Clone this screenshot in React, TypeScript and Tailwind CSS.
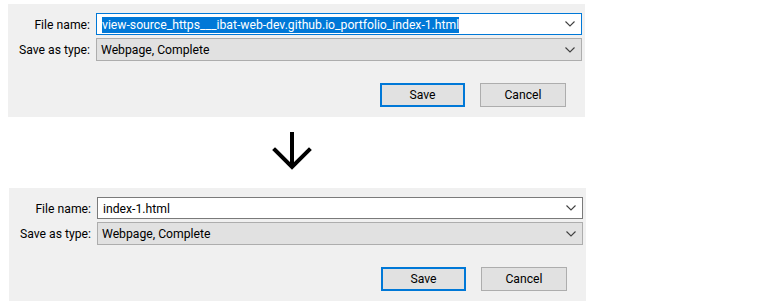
import React from "react";

const Chevron = () => (
  <svg width="10" height="6" viewBox="0 0 10 6" className="shrink-0">
    <path d="M0.5 0.5 L5 5 L9.5 0.5" fill="none" stroke="#404040" strokeWidth="1.1" />
  </svg>
);

function Panel({ selected, name }: { selected: boolean; name: string }) {
  return (
    <div className="w-[577px] h-[113px] bg-[#f0f0f0] flex flex-col pt-[9px] pr-[3px]">
      <div className="flex items-center h-[22px]">
        <div className="w-[83px] text-right pr-[1px] pt-[2px]">File name:</div>
        <div
          className={
            "ml-[5px] w-[486px] h-[22px] bg-white flex items-center pl-[5px] pr-[6px] " +
            (selected ? "border border-[#0078d7]" : "border border-[#7a7a7a]")
          }
        >
          <div className="flex-1 flex items-center pt-[1px]">
            {selected ? (
              <span className="bg-[#0078d7] text-white leading-[16px]">{name}</span>
            ) : (
              <span className="leading-[16px]">{name}</span>
            )}
          </div>
          <Chevron />
        </div>
      </div>
      <div className="flex items-center h-[23px] mt-[3px]">
        <div className="w-[83px] text-right pr-[1px] pt-[2px]">Save as type:</div>
        <div className="ml-[5px] w-[486px] h-[23px] bg-[#e1e1e1] border border-[#adadad] flex items-center pl-[4px] pr-[6px]">
          <div className="flex-1 pt-[2px]">Webpage, Complete</div>
          <Chevron />
        </div>
      </div>
      <div className="flex justify-end mt-[22px] pr-[16px] gap-[15px]">
        <button className="w-[85px] h-[24px] bg-[#e1e1e1] border-2 border-[#0078d7] text-black pt-[1px]">Save</button>
        <button className="w-[86px] h-[24px] bg-[#e1e1e1] border border-[#adadad] text-black pt-[1px]">Cancel</button>
      </div>
    </div>
  );
}

export default function App() {
  return (
    <div
      className="w-[760px] h-[307px] bg-white text-[12.2px] text-black"
      style={{ fontFamily: 'Roboto, "Noto Sans", sans-serif' }}
    >
      <div className="pl-[8px] pt-[4px]">
        <Panel selected name="view-source_https___ibat-web-dev.github.io_portfolio_index-1.html" />
      </div>
      <div className="h-[71px] flex items-start pl-[272px] pt-[14px]">
        <svg width="42" height="42" viewBox="0 0 42 42">
          <path d="M20 1 L20 36" stroke="#000" strokeWidth="4" fill="none" />
          <path d="M3 19 L20 36 L37 19" stroke="#000" strokeWidth="4" fill="none" strokeLinecap="square" />
        </svg>
      </div>
      <div className="pl-[9px]">
        <Panel selected={false} name="index-1.html" />
      </div>
    </div>
  );
}
